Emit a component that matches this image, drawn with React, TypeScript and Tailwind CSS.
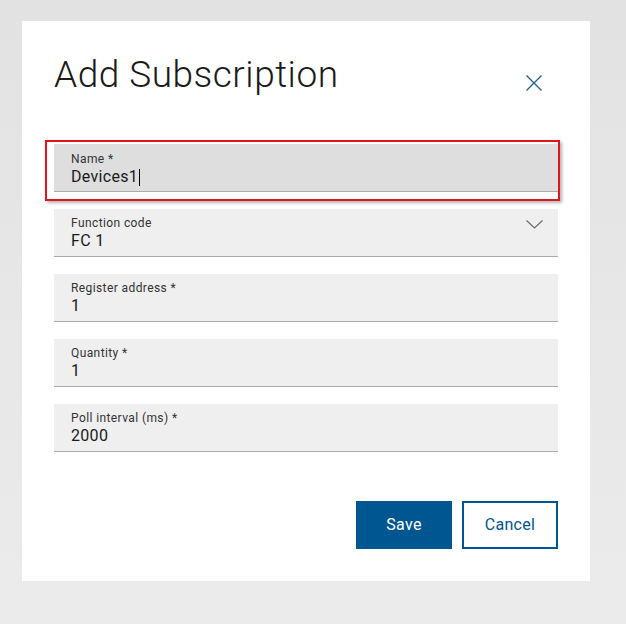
import React from "react";

const fields = [
  { label: "Function code", value: "FC 1", select: true },
  { label: "Register address *", value: "1" },
  { label: "Quantity *", value: "1" },
  { label: "Poll interval (ms) *", value: "2000" },
];

const Field: React.FC<{ label: string; value: string; select?: boolean }> = ({ label, value, select }) => (
  <div className="relative h-12 bg-[#efefef] border-b border-[#ababab] pl-[17px] pr-4">
    <p className="pt-[6px] text-[12px] leading-4 tracking-[0.4px] text-[#333333]">{label}</p>
    <p className="text-[16px] leading-5 tracking-[0.3px] text-[#1a1a1a]">{value}</p>
    {select && (
      <svg
        className="absolute right-[15px] top-[11px]"
        width="17"
        height="9"
        viewBox="0 0 17 9"
        fill="none"
        stroke="#6b6b6b"
        strokeWidth="1.2"
      >
        <path d="M0.5 0.5 L8.5 8 L16.5 0.5" />
      </svg>
    )}
  </div>
);

export default function App() {
  return (
    <div
      className="w-[626px] h-[624px] pt-[21px] pl-[22px] bg-gradient-to-b from-[#e2e2e2] via-[#e7e7e7] to-[#ebebeb]"
      style={{ fontFamily: "Roboto, 'Liberation Sans', sans-serif" }}
    >
      <div className="w-[568px] h-[560px] bg-white px-8 pt-8">
        {/* Header */}
        <div className="flex items-start justify-between mb-[47px]">
          <h2 className="text-[37px] leading-[44px] font-light text-[#1a1a1a] tracking-[0.5px]">
            Add Subscription
          </h2>
          <svg
            className="mt-[22px] mr-4"
            width="16"
            height="16"
            viewBox="0 0 16 16"
            fill="none"
            stroke="#1f5f8f"
            strokeWidth="1.3"
          >
            <path d="M0.5 0.5 L15.5 15.5 M15.5 0.5 L0.5 15.5" />
          </svg>
        </div>

        {/* Form */}
        <div className="flex flex-col gap-[17px]">
          <div className="relative">
            <div className="h-12 bg-[#dedede] border-b border-[#ababab] pl-[17px] pr-4">
              <p className="pt-[7px] text-[12px] leading-4 tracking-[0.4px] text-[#333333]">Name *</p>
              <div className="flex items-center text-[16px] leading-5 tracking-[0.3px] text-[#1a1a1a]">
                Devices1
                <span className="ml-[1px] w-px h-[17px] bg-black" />
              </div>
            </div>
            <div className="absolute -left-[9px] -top-[4px] -right-[2px] -bottom-[9px] border-2 border-[#e3141b] shadow-[2px_2px_3px_rgba(0,0,0,0.3)] pointer-events-none" />
          </div>
          {fields.map((f) => (
            <Field key={f.label} label={f.label} value={f.value} select={f.select} />
          ))}
        </div>

        {/* Actions */}
        <div className="flex justify-end gap-[10px] mt-[49px]">
          <button className="w-24 h-12 bg-[#005691] text-white text-[16px] tracking-[0.3px]">Save</button>
          <button className="w-24 h-12 border-2 border-[#005691] text-[#005691] text-[16px] tracking-[0.3px] bg-white">
            Cancel
          </button>
        </div>
      </div>
    </div>
  );
}
